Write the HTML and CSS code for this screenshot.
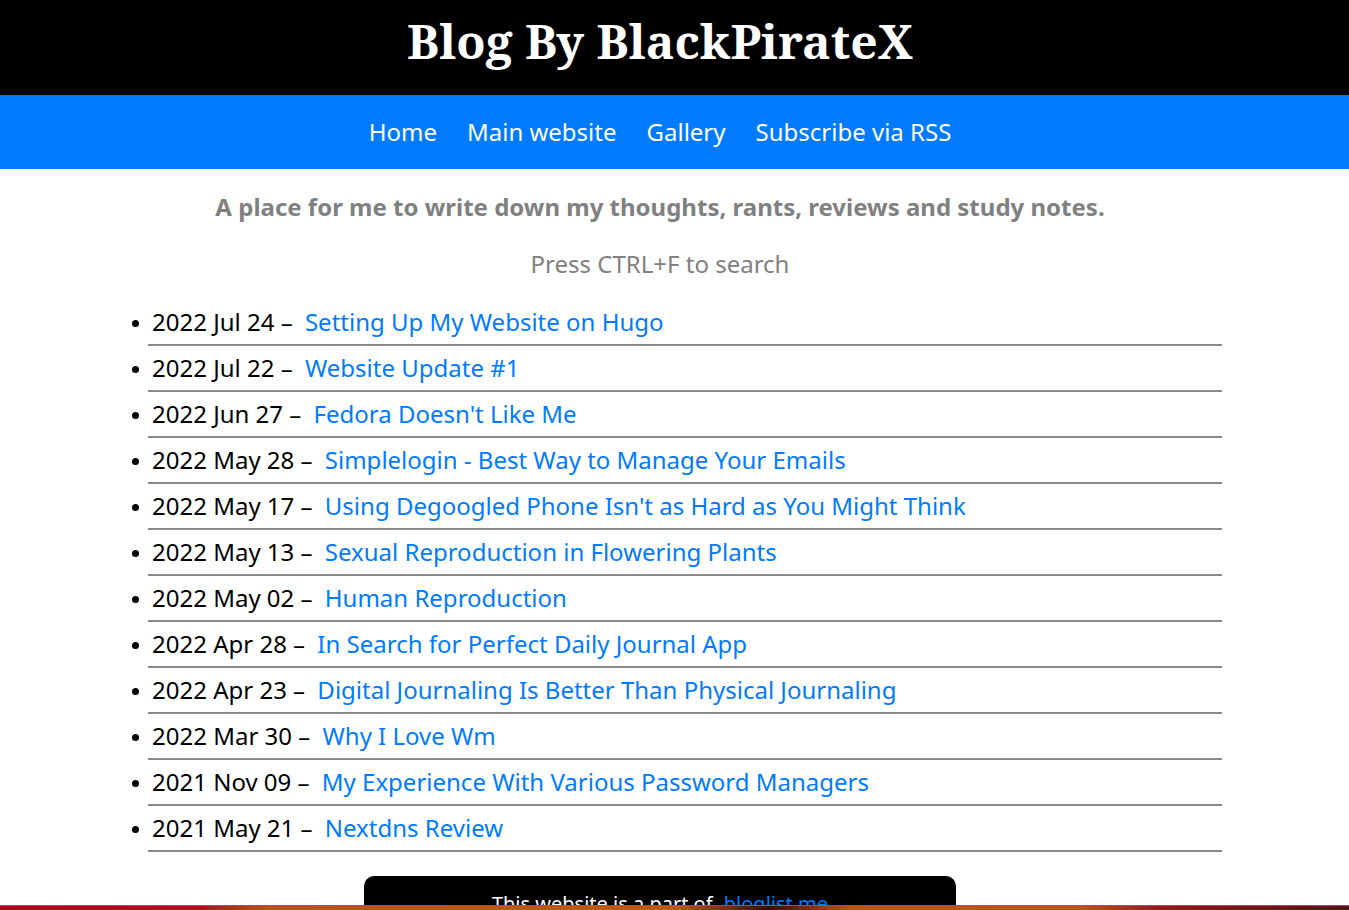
FILE: index.html
```html
<!DOCTYPE html>
<html lang="en">
<head>
<meta charset="utf-8">
<title>Blog By BlackPirateX</title>
<link rel="stylesheet" href="styles.css">
</head>
<body>
<header class="top">
  <div class="inner"><h1 class="title">Blog By BlackPirateX</h1></div>
</header>
<nav class="nav">
  <div class="inner nav-links">
    <a href="#">Home</a>
    <a href="#">Main website</a>
    <a href="#">Gallery</a>
    <a href="#">Subscribe via RSS</a>
  </div>
</nav>
<main class="inner">
  <p class="tagline">A place for me to write down my thoughts, rants, reviews and study notes.</p>
  <p class="hint">Press CTRL+F to search</p>
  <ul class="posts">
    <li><span class="date">2022 Jul 24 –</span> <a href="#">Setting Up My Website on Hugo</a></li>
    <li><span class="date">2022 Jul 22 –</span> <a href="#">Website Update #1</a></li>
    <li><span class="date">2022 Jun 27 –</span> <a href="#">Fedora Doesn't Like Me</a></li>
    <li><span class="date">2022 May 28 –</span> <a href="#">Simplelogin - Best Way to Manage Your Emails</a></li>
    <li><span class="date">2022 May 17 –</span> <a href="#">Using Degoogled Phone Isn't as Hard as You Might Think</a></li>
    <li><span class="date">2022 May 13 –</span> <a href="#">Sexual Reproduction in Flowering Plants</a></li>
    <li><span class="date">2022 May 02 –</span> <a href="#">Human Reproduction</a></li>
    <li><span class="date">2022 Apr 28 –</span> <a href="#">In Search for Perfect Daily Journal App</a></li>
    <li><span class="date">2022 Apr 23 –</span> <a href="#">Digital Journaling Is Better Than Physical Journaling</a></li>
    <li><span class="date">2022 Mar 30 –</span> <a href="#">Why I Love Wm</a></li>
    <li><span class="date">2021 Nov 09 –</span> <a href="#">My Experience With Various Password Managers</a></li>
    <li><span class="date">2021 May 21 –</span> <a href="#">Nextdns Review</a></li>
  </ul>
  <div class="bloglist">
    <p>This website is a part of <a href="#">bloglist.me</a></p>
  </div>
</main>
<div class="strip"></div>
</body>
</html>
```
FILE: styles.css
```css
html, body {
  margin: 0;
  padding: 0;
  background: #fff;
}
body {
  font-family: "Noto Sans", "Open Sans", sans-serif;
  color: #000;
}
.inner {
  width: 1320px;
}
.top {
  background: #000;
  height: 95px;
}
.title {
  margin: 0;
  font-family: "Noto Serif", "DejaVu Serif", serif;
  font-weight: 700;
  font-size: 48px;
  color: #fff;
  text-align: center;
  line-height: 81px;
}
.nav {
  background: #007bff;
  height: 74px;
}
.nav-links {
  display: flex;
  justify-content: center;
  align-items: center;
  gap: 30px;
  height: 72px;
}
.nav-links a {
  color: #fff;
  text-decoration: none;
  font-size: 24px;
}
.tagline {
  margin: 22px 0 0;
  text-align: center;
  font-weight: 700;
  font-size: 24px;
  line-height: 32px;
  color: #808080;
}
.hint {
  margin: 25px 0 0;
  text-align: center;
  font-size: 24px;
  line-height: 32px;
  color: #808080;
}
.posts {
  margin: 20px 98px 0 108px;
  padding: 0 0 0 40px;
  list-style: none;
}
.posts li {
  font-size: 24px;
  line-height: 36px;
  padding: 4px 0 4px 4px;
  border-bottom: 2px solid;
  border-image: linear-gradient(#4a4a4a 50%, #8a8a8a 50%) 1;
}
.posts li::before {
  content: "";
  display: inline-block;
  width: 7px;
  height: 7px;
  border-radius: 50%;
  background: #000;
  margin-left: -20px;
  margin-right: 13px;
  vertical-align: middle;
  position: relative;
  top: -1px;
}
.date {
  color: #000;
  margin-right: 6px;
}
.posts a {
  color: #007bff;
  text-decoration: none;
}
.bloglist {
  width: 592px;
  margin: 24px 0 0 364px;
  background: #000;
  border-radius: 10px;
  padding: 14px 0;
  text-align: center;
}
.bloglist p {
  margin: 0;
  color: #fff;
  font-size: 20px;
}
.bloglist a {
  color: #007bff;
  text-decoration: none;
  margin-left: 6px;
}
.strip {
  position: fixed;
  left: 0;
  right: 0;
  bottom: 0;
  height: 4px;
  border-top: 1px solid #3c7a84;
  background: linear-gradient(90deg, #9b1010 0%, #a51a12 15%, #c3500f 20%, #c8560e 50%, #3a0b0b 57%, #c4520f 63%, #c5530f 80%, #9d1414 86%, #5a1010 100%);
}
```
